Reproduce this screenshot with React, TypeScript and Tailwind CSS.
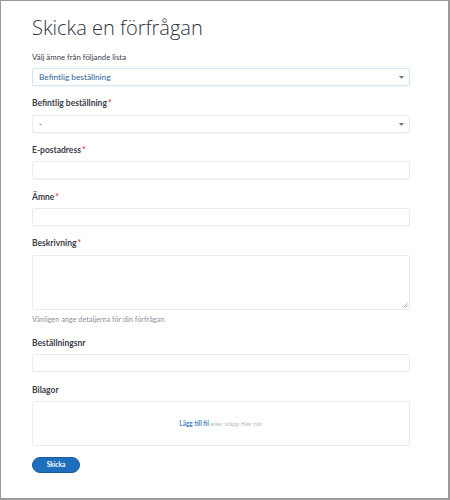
import { ReactNode } from "react"

function Label({ children, required = false, className = "" }: { children: ReactNode, required?: boolean, className?: string }) {
    return (
        <label className={`block leading-[12px] text-[#3b404b] ${className}`}>
            {children}
            {required && <span className="text-[#e3474c] ml-[1px]">*</span>}
        </label>
    )
}

function Caret() {
    return (
        <svg width="5" height="3" viewBox="0 0 5 3" className="shrink-0">
            <path d="M0 0h5L2.5 3z" fill="#74777d" />
        </svg>
    )
}

function Field({ children, className = "" }: { children?: ReactNode, className?: string }) {
    return (
        <div className={`h-[18px] w-[378px] rounded-[2px] border bg-white shadow-[0_1px_1px_rgba(0,0,0,0.04)] flex items-center justify-between pl-[6px] pr-[5px] ${className}`}>
            {children}
        </div>
    )
}

export default function App() {
    return (
        <div className="w-[450px] h-[500px] bg-white border-l border-t border-r-2 border-b-2 border-[#9a9a9a] font-['Lato',sans-serif]">
            <div className="pl-[31px] pt-[13px]">
                <h1 className="text-[20px] leading-[28px] font-light text-[#2f3441] font-['Open_Sans',sans-serif]">Skicka en förfrågan</h1>

                <div className="mt-[9px]">
                    <Label className="text-[7.8px]">Välj ämne från följande lista</Label>
                    <Field className="mt-[5px] border-[#cde7f4]">
                        <span className="text-[8.3px] text-[#2d5f9e]">Befintlig beställning</span>
                        <Caret />
                    </Field>
                </div>

                <div className="mt-[11px]">
                    <Label required className="text-[8.5px] font-bold">Befintlig beställning</Label>
                    <Field className="mt-[6px] border-[#ececec]">
                        <span className="text-[8.3px] text-[#555]">-</span>
                        <Caret />
                    </Field>
                </div>

                <div className="mt-[11px]">
                    <Label required className="text-[8.5px] font-bold">E-postadress</Label>
                    <Field className="mt-[5px] border-[#ececec]" />
                </div>

                <div className="mt-[12px]">
                    <Label required className="text-[8.5px] font-bold">Ämne</Label>
                    <Field className="mt-[5px] border-[#ececec]" />
                </div>

                <div className="mt-[11px]">
                    <Label required className="text-[8.5px] font-bold">Beskrivning</Label>
                    <div className="relative mt-[6px] h-[55px] w-[378px] rounded-[2px] border border-[#ececec] bg-white">
                        <svg width="5" height="5" viewBox="0 0 5 5" className="absolute right-[1px] bottom-[1px]">
                            <path d="M4.5 0.5L0.5 4.5M4.5 2.5L2.5 4.5" stroke="#9a9a9a" strokeWidth="0.8" />
                        </svg>
                    </div>
                    <p className="mt-[5px] text-[7.3px] leading-[10px] text-[#8d929b]">Vänligen ange detaljerna för din förfrågan</p>
                </div>

                <div className="mt-[12px]">
                    <Label className="text-[8.5px] font-bold">Beställningsnr</Label>
                    <Field className="mt-[5px] border-[#ececec]" />
                </div>

                <div className="mt-[12px]">
                    <Label className="text-[8.5px] font-bold">Bilagor</Label>
                    <div className="mt-[5px] h-[45px] w-[378px] rounded-[2px] border border-[#ececec] bg-white flex items-center justify-center">
                        <p className="text-[6.5px] text-[#b8bcc2]">
                            <span className="font-bold text-[#4a86c8]">Lägg till fil</span> eller släpp filer här
                        </p>
                    </div>
                </div>

                <button className="mt-[11px] h-[16px] w-[48px] rounded-full bg-[#1d6fbd] border border-[#175d9f] text-white text-[6.5px] font-bold flex items-center justify-center">
                    Skicka
                </button>
            </div>
        </div>
    )
}
